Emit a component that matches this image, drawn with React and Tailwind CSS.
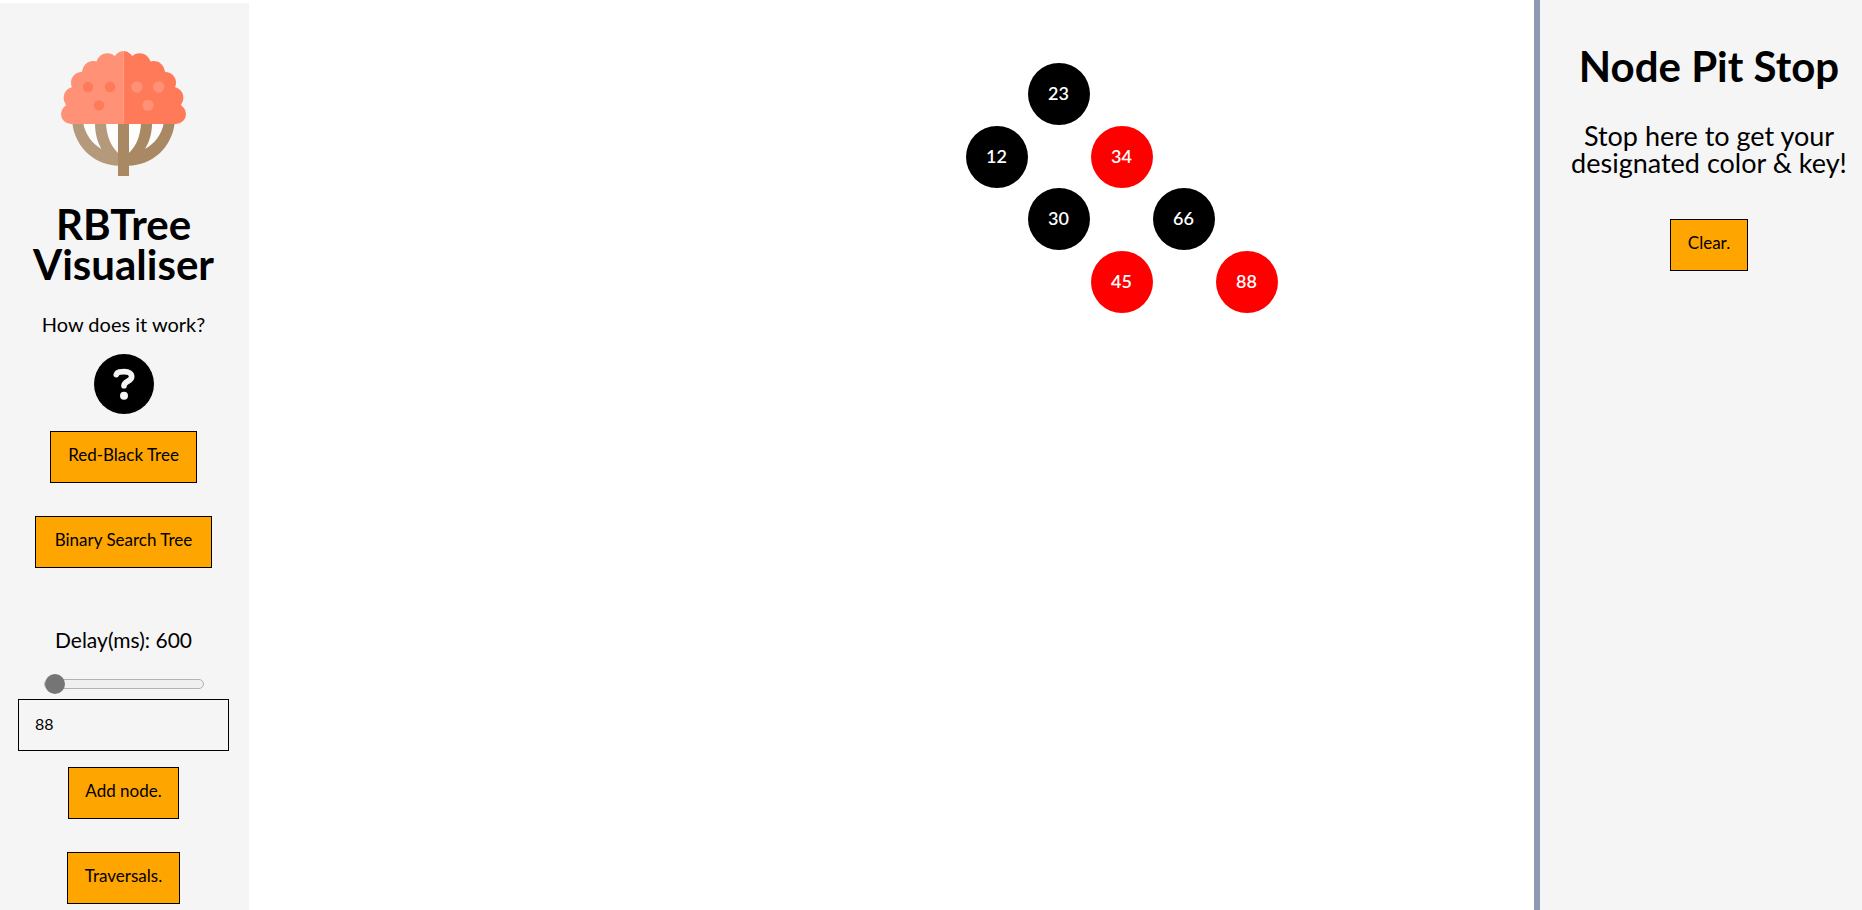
import { useState } from 'react';

const NODES = [
  { key: 23, dx: -31, top: 63, red: false },
  { key: 12, dx: -93, top: 126, red: false },
  { key: 34, dx: 32, top: 126, red: true },
  { key: 30, dx: -31, top: 188, red: false },
  { key: 66, dx: 94, top: 188, red: false },
  { key: 45, dx: 32, top: 251, red: true },
  { key: 88, dx: 157, top: 251, red: true },
];

function Canopy({ fill }) {
  return (
    <g fill={fill}>
      <circle cx="370.5" cy="183" r="30" />
      <circle cx="322" cy="193" r="33" />
      <circle cx="280" cy="216" r="33" />
      <circle cx="245" cy="248" r="32" />
      <circle cx="223" cy="293" r="32" />
      <circle cx="213" cy="342" r="30" />
      <circle cx="419" cy="193" r="33" />
      <circle cx="461" cy="216" r="33" />
      <circle cx="496" cy="248" r="32" />
      <circle cx="518" cy="293" r="32" />
      <circle cx="528" cy="342" r="30" />
      <path d="M213 372 L197 315 L216 262 L250 208 L294 182 L346 167 L395 167 L447 182 L491 208 L525 262 L544 315 L528 372Z" />
    </g>
  );
}

function TreeLogo() {
  return (
    <svg className="size-[125px]" viewBox="183 153 375 375" role="img" aria-label="Tree">
      <defs>
        <clipPath id="left-half"><rect x="180" y="150" width="190.5" height="380" /></clipPath>
        <clipPath id="right-half"><rect x="370.5" y="150" width="190" height="380" /></clipPath>
      </defs>
      <path fill="#b49a7b" d="M217 370 C226 444 286 497 356 497 V370Z" />
      <path fill="#a98963" d="M524 370 C515 444 455 497 385 497 V370Z" />
      <g fill="#fdfdfd">
        <path d="M250 370 C255 402 277 432 304 447 C292 425 285 400 285 370Z" />
        <path d="M318 370 C320 410 333 440 355 460 V370Z" />
        <path d="M491 370 C486 402 464 432 435 447 C449 425 456 400 456 370Z" />
        <path d="M423 370 C421 410 408 440 386 460 V370Z" />
      </g>
      <rect x="354" y="370" width="33" height="158" fill="#a98963" />
      <g clipPath="url(#left-half)"><Canopy fill="#ff9177" /></g>
      <g clipPath="url(#right-half)"><Canopy fill="#ff7a58" /></g>
      <rect x="369" y="153" width="3" height="219" fill="#ff9f87" />
      <g fill="#ff7a58">
        <circle cx="264" cy="261" r="15.5" />
        <circle cx="330" cy="261" r="15.5" />
        <circle cx="297" cy="316" r="15.5" />
      </g>
      <g fill="#ff9177">
        <circle cx="411" cy="261" r="17" />
        <circle cx="476" cy="261" r="17" />
        <circle cx="444" cy="316" r="17" />
      </g>
    </svg>
  );
}

function Button({ children, className = '' }) {
  return (
    <button
      type="button"
      className={`h-[52px] cursor-pointer border border-black bg-[#ffa500] pb-1 text-[17px] whitespace-nowrap ${className}`}
    >
      {children}
    </button>
  );
}

export default function App() {
  const [delay, setDelay] = useState(600);
  const [value, setValue] = useState('88');

  return (
    <div className="flex min-h-screen bg-white font-['Lato',sans-serif] text-black">
      <aside className="mt-[3px] flex w-[249px] shrink-0 flex-col items-center bg-[#f5f5f5] pt-12 pr-5 pb-[7px] pl-[18px]">
        <TreeLogo />
        <h1 className="mt-7 text-center text-[42px] leading-10 font-bold">RBTree Visualiser</h1>
        <p className="mt-7 text-xl leading-6">How does it work?</p>
        <button type="button" aria-label="Help" className="mt-[18px] size-[60px] cursor-pointer">
          <svg className="size-full" viewBox="0 0 180 180" fill="none">
            <circle cx="90" cy="90" r="90" fill="#000" />
            <path
              d="M67 62 C70 53 80 53 91 53 C105 53 113 59 113 68 C113 82 90 81 90 95"
              stroke="#f5f5f5"
              strokeWidth="17"
              strokeLinecap="round"
              strokeLinejoin="round"
            />
            <circle cx="90" cy="125" r="12" fill="#f5f5f5" />
          </svg>
        </button>
        <Button className="mt-[17px] w-[147px]">Red-Black Tree</Button>
        <Button className="mt-[33px] w-[177px]">Binary Search Tree</Button>
        <label htmlFor="delay" className="mt-[60px] text-[21px] leading-6">
          Delay(ms): {delay}
        </label>
        <input
          id="delay"
          type="range"
          min="600"
          max="3000"
          value={delay}
          onChange={(e) => setDelay(Number(e.target.value))}
          className="mt-[22px] h-5 w-40 appearance-none bg-transparent [&::-webkit-slider-runnable-track]:h-[10px] [&::-webkit-slider-runnable-track]:rounded-full [&::-webkit-slider-runnable-track]:border [&::-webkit-slider-runnable-track]:border-[#b2b2b2] [&::-webkit-slider-runnable-track]:bg-[#efefef] [&::-webkit-slider-thumb]:-mt-[6px] [&::-webkit-slider-thumb]:size-5 [&::-webkit-slider-thumb]:appearance-none [&::-webkit-slider-thumb]:rounded-full [&::-webkit-slider-thumb]:bg-[#757575]"
        />
        <input
          type="text"
          aria-label="Node key"
          value={value}
          onChange={(e) => setValue(e.target.value)}
          className="mt-[5px] h-[52px] w-full border border-black bg-transparent px-4 pb-1 text-base outline-none"
        />
        <Button className="mt-4 w-[111px]">Add node.</Button>
        <Button className="mt-[33px] w-[113px]">Traversals.</Button>
      </aside>

      <main className="relative flex-1">
        {NODES.map((node) => (
          <div
            key={node.key}
            className={`absolute flex size-[62px] items-center justify-center rounded-full pb-[3px] text-lg font-semibold text-white ${node.red ? 'bg-[#ff0000]' : 'bg-black'}`}
            style={{ left: `calc(63% + ${node.dx}px)`, top: node.top }}
          >
            {node.key}
          </div>
        ))}
      </main>

      <aside className="flex w-[328px] shrink-0 flex-col items-center border-l-[6px] border-[#8d99b1] bg-[#f5f5f5] pt-[46px] pl-4">
        <h2 className="text-[42px] leading-10 font-bold whitespace-nowrap">Node Pit Stop</h2>
        <p className="mt-9 text-center text-[27px] leading-[27px] whitespace-nowrap">
          Stop here to get your
          <br />
          designated color &amp; key!
        </p>
        <Button className="mt-[43px] w-[78px]">Clear.</Button>
      </aside>
    </div>
  );
}
